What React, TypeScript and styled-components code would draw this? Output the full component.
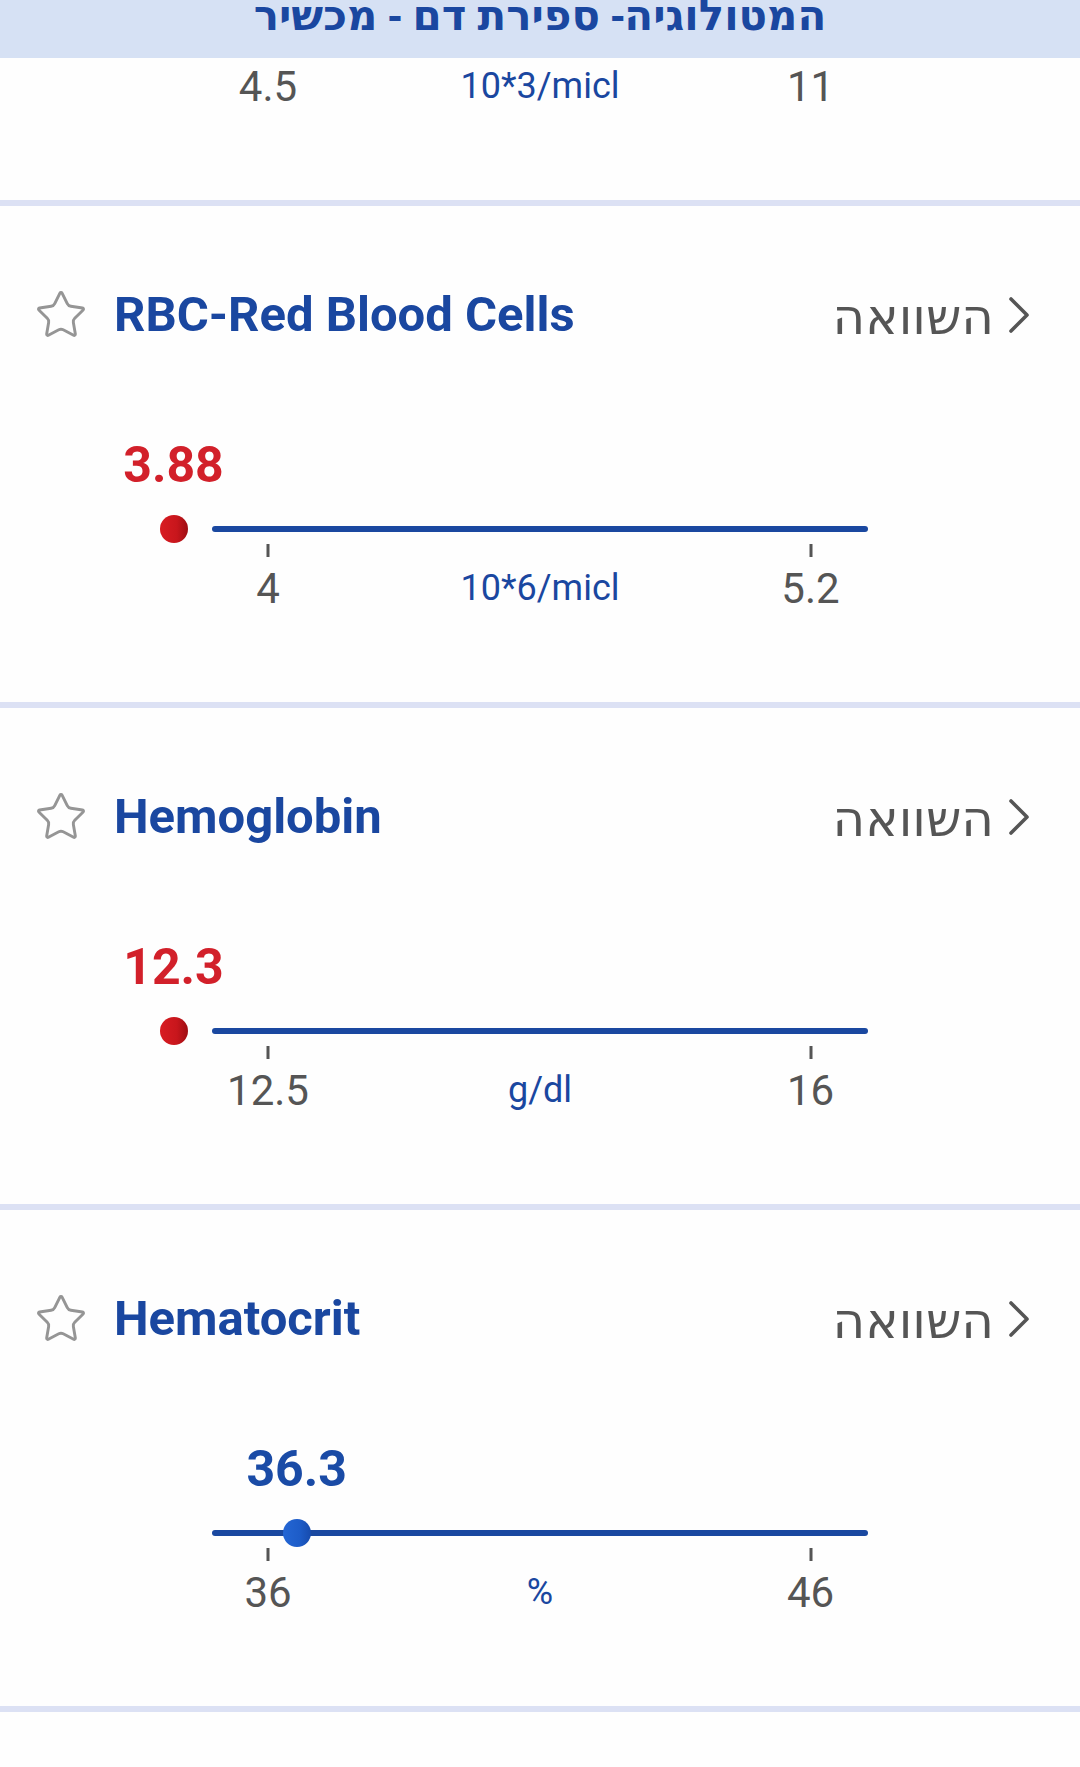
import React from "react";
import styled, { createGlobalStyle } from "styled-components";
import { Star } from "lucide-react";

type TestType = {
  name: string;
  value: string;
  low: string;
  high: string;
  unit: string;
  dotX: number;
  inRange: boolean;
};

// tick positions on the track, px from its left end
const LOW_X = 56;
const HIGH_X = 598.5;

const tests: TestType[] = [
  { name: "RBC-Red Blood Cells", value: "3.88", low: "4", high: "5.2", unit: "10*6/micl", dotX: -38.5, inRange: false },
  { name: "Hemoglobin", value: "12.3", low: "12.5", high: "16", unit: "g/dl", dotX: -38.5, inRange: false },
  { name: "Hematocrit", value: "36.3", low: "36", high: "46", unit: "%", dotX: 84.7, inRange: true },
];

const App: React.FC = () => {
  return (
    <Page>
      <GlobalStyle />
      <Header>
        <HeaderTitle>המטולוגיה- ספירת דם - מכשיר</HeaderTitle>
      </Header>
      <Tail>
        <Scale>
          <ScaleLabel style={{ left: LOW_X }}>4.5</ScaleLabel>
          <Unit>10*3/micl</Unit>
          <ScaleLabel style={{ left: HIGH_X }}>11</ScaleLabel>
        </Scale>
      </Tail>
      {tests.map((t) => (
        <Card key={t.name}>
          <TitleRow>
            <StarBox>
              <Star size={54} strokeWidth={1.3} color="#959595" />
            </StarBox>
            <Title>{t.name}</Title>
            <Compare>
              <span>השוואה</span>
              <svg width="20" height="36" viewBox="0 0 20 36">
                <polyline
                  points="2,2 18,18 2,34"
                  fill="none"
                  stroke="#555"
                  strokeWidth="3.6"
                  strokeLinecap="round"
                  strokeLinejoin="round"
                />
              </svg>
            </Compare>
          </TitleRow>
          <Gauge>
            <ValueRow>
              <Value $alert={!t.inRange} style={{ left: t.dotX }}>
                {t.value}
              </Value>
            </ValueRow>
            <Track>
              <Dot $alert={!t.inRange} style={{ left: t.dotX }} />
            </Track>
            <Ticks>
              <Tick style={{ left: LOW_X }} />
              <Tick style={{ left: HIGH_X }} />
            </Ticks>
            <Scale>
              <ScaleLabel style={{ left: LOW_X }}>{t.low}</ScaleLabel>
              <Unit>{t.unit}</Unit>
              <ScaleLabel style={{ left: HIGH_X }}>{t.high}</ScaleLabel>
            </Scale>
          </Gauge>
        </Card>
      ))}
    </Page>
  );
};

export default App;

const GlobalStyle = createGlobalStyle`
  html, body {
    margin: 0;
    padding: 0;
    background: #fefefe;
  }
  body {
    font-family: Roboto, "Noto Sans", "DejaVu Sans", sans-serif;
  }
  * {
    box-sizing: border-box;
  }
`;

const Page = styled.div`
  width: 1080px;
  height: 1767px;
  overflow: hidden;
  display: flex;
  flex-direction: column;
  background: #fefefe;
`;

const Header = styled.div`
  height: 58px;
  flex-shrink: 0;
  background-color: #d6e1f4;
  display: flex;
  justify-content: center;
  overflow: hidden;
`;

const HeaderTitle = styled.h1`
  margin: -8px 0 0 0;
  direction: rtl;
  color: #1a47a0;
  font-family: "Noto Sans", "DejaVu Sans", sans-serif;
  font-size: 42px;
  font-weight: 700;
  line-height: 44px;
  white-space: nowrap;
`;

const Tail = styled.div`
  height: 148px;
  flex-shrink: 0;
  padding-top: 6px;
  border-bottom: 6px solid #dce1f4;
`;

const Card = styled.div`
  height: 502px;
  flex-shrink: 0;
  padding-top: 77px;
  border-bottom: 6px solid #dce1f4;
`;

const TitleRow = styled.div`
  height: 64px;
  display: flex;
  align-items: center;
  padding: 0 51px 0 34px;
`;

const StarBox = styled.div`
  width: 54px;
  height: 54px;
  display: flex;
  align-items: center;
  justify-content: center;
`;

const Title = styled.h2`
  flex: 1;
  margin: 0 0 0 26px;
  color: #1a47a0;
  font-size: 49px;
  font-weight: 700;
  line-height: 64px;
  white-space: nowrap;
`;

const Compare = styled.div`
  display: flex;
  align-items: center;
  column-gap: 15px;
  color: #555;
  font-family: "Noto Sans", "DejaVu Sans", sans-serif;
  font-size: 50px;
  line-height: 64px;
`;

const Gauge = styled.div`
  width: 656px;
  margin: 90px 0 0 212px;
`;

const ValueRow = styled.div`
  position: relative;
  height: 56px;
`;

const Value = styled.div<{ $alert: boolean }>`
  position: absolute;
  top: 0;
  transform: translateX(-50%);
  color: ${(p) => (p.$alert ? "#d2202a" : "#1a4ba6")};
  font-size: 50px;
  font-weight: 700;
  line-height: 56px;
  white-space: nowrap;
`;

const Track = styled.div`
  position: relative;
  height: 6px;
  margin-top: 33px;
  border-radius: 3px;
  background-color: #1a48a0;
`;

const Dot = styled.div<{ $alert: boolean }>`
  position: absolute;
  top: 50%;
  width: 28px;
  height: 28px;
  border-radius: 50%;
  transform: translate(-50%, -50%);
  background: ${(p) =>
    p.$alert
      ? "linear-gradient(90deg, #d81c22 0%, #c8161c 60%, #9e0d12 100%)"
      : "linear-gradient(90deg, #2466d4 0%, #1d5cc8 60%, #174bad 100%)"};
`;

const Ticks = styled.div`
  position: relative;
  height: 13px;
  margin-top: 12px;
`;

const Tick = styled.div`
  position: absolute;
  top: 0;
  width: 3px;
  height: 13px;
  transform: translateX(-50%);
  background-color: #555;
`;

const Scale = styled.div`
  position: relative;
  width: 656px;
  height: 46px;
  margin-top: 9px;

  ${Tail} & {
    margin: 0 0 0 212px;
  }
`;

const ScaleLabel = styled.div`
  position: absolute;
  top: 0;
  transform: translateX(-50%);
  color: #555;
  font-size: 42px;
  line-height: 46px;
  white-space: nowrap;
`;

const Unit = styled.div`
  position: absolute;
  top: 0;
  left: 50%;
  transform: translateX(-50%);
  color: #1a47a0;
  font-size: 36px;
  line-height: 44px;
  white-space: nowrap;
`;
